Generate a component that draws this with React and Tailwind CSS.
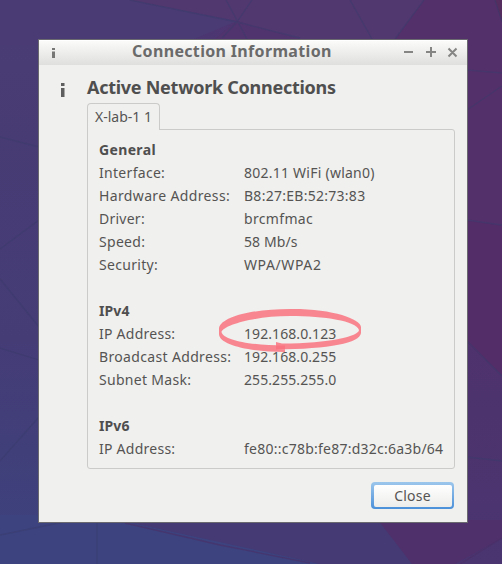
const FONT = 'font-["Noto_Sans","Open_Sans",sans-serif]';

const rows = [
  { head: "General", t: "tracking-[0.35px]" },
  { label: "Interface:", t: "tracking-[0.3px]", value: "802.11 WiFi (wlan0)", v: "tracking-[0.24px]" },
  { label: "Hardware Address:", t: "tracking-[0.36px]", value: "B8:27:EB:52:73:83", v: "tracking-[0.27px]" },
  { label: "Driver:", t: "tracking-[0.25px]", value: "brcmfmac", v: "tracking-[0.33px]" },
  { label: "Speed:", t: "tracking-[0.3px]", value: "58 Mb/s", v: "tracking-[0.1px]" },
  { label: "Security:", t: "tracking-[0.3px]", value: "WPA/WPA2", v: "tracking-[0.6px]" },
  {},
  { head: "IPv4", t: "tracking-[0.1px]" },
  { label: "IP Address:", t: "tracking-[0.25px]", value: "192.168.0.123", v: "tracking-[0.08px]", marked: true },
  { label: "Broadcast Address:", t: "tracking-[0.34px]", value: "192.168.0.255", v: "tracking-[0.08px]" },
  { label: "Subnet Mask:", t: "tracking-[0.3px]", value: "255.255.255.0", v: "tracking-[0.08px]" },
  {},
  { head: "IPv6", t: "tracking-[0.1px]" },
  { label: "IP Address:", t: "tracking-[0.25px]", value: "fe80::c78b:fe87:d32c:6a3b/64", v: "tracking-[0.24px]" },
];

function Wallpaper() {
  return (
    <svg className="absolute inset-0" width="502" height="564" viewBox="0 0 502 564">
      <defs>
        <linearGradient id="base" gradientUnits="userSpaceOnUse" x1="0" y1="480" x2="502" y2="200">
          <stop offset="0" stopColor="#3c427e" />
          <stop offset=".35" stopColor="#463c77" />
          <stop offset=".75" stopColor="#4d3570" />
          <stop offset="1" stopColor="#512f69" />
        </linearGradient>
        <linearGradient id="left" x1="0" y1="0" x2="0" y2="1">
          <stop offset="0" stopColor="#4a3b73" />
          <stop offset=".6" stopColor="#453c76" />
          <stop offset="1" stopColor="#3c427e" />
        </linearGradient>
        <linearGradient id="right" x1="0" y1="0" x2="0" y2="1">
          <stop offset="0" stopColor="#4e326d" />
          <stop offset="1" stopColor="#4a3570" />
        </linearGradient>
      </defs>
      <rect width="502" height="564" fill="url(#base)" />
      <path d="M0 0H60V564H0Z" fill="url(#left)" />
      <path d="M0 0H140L237 21L180 45H0Z" fill="#4a3b74" />
      <path d="M130 0H424L395 45H300L237 21Z" fill="#51386f" />
      <path d="M237 21L300 39H215Z" fill="#50346d" />
      <path d="M424 0H495L502 22V345L467 341V45L395 39Z" fill="#54306a" />
      <path d="M495 0H502V22Z" fill="#552d5f" />
      <path d="M460 220L502 225V376L460 336Z" fill="#522d68" />
      <path d="M460 336L502 376V564H460Z" fill="url(#right)" />
      <path d="M0 515H125L320 564H0Z" fill="#3c437f" />
      <path d="M118 520H380L412 564H320Z" fill="#453a74" />
      <path d="M378 520H502V538L455 564H412Z" fill="#4f306b" />
      <g stroke="#393b6c" strokeOpacity=".5" strokeWidth="1.3" fill="none">
        <path d="M130 0L237 22L300 38M226 0L247 39M252 0L237 22L222 38M350 0L372 39M424 0L395 39M495 0L502 22" />
        <path d="M467 70L502 73M467 110L502 86M467 220L502 225M467 341L502 376M467 457L502 461" />
        <path d="M0 137L39 147M39 220L0 249M0 279L39 327M0 348L39 360M39 417L0 461M0 535L64 522M97 522V564" />
      </g>
      <path d="M125 523L220 545L310 563M502 538L460 564" stroke="#4b2e66" strokeOpacity=".6" strokeWidth="1.3" fill="none" />
    </svg>
  );
}

function InfoGlyph({ small }) {
  return small ? (
    <svg width="5" height="12" viewBox="0 0 5 12" fill="#777775">
      <path d="M1 1h3v2H1zM1 4.500h3v6.500H1z" />
    </svg>
  ) : (
    <svg width="6" height="16" viewBox="0 0 6 16" fill="#5e5e5e">
      <path d="M1 1h3.500v3H1zM1 6h3.500v9H1z" />
    </svg>
  );
}

function RedCircle() {
  return (
    <svg className="pointer-events-none absolute -left-[26px] -top-[15px]" width="146" height="48" viewBox="218 307 146 48">
      <g fill="#ff3347" fillOpacity=".56">
        <path d="M285 352C250 352 219 345 219 334V328C222 316 255 309 290 309C332 308.500 361 319 361 327V333C360 343 330 349 276 349.500V342L282 343.500C330 343.500 359 336 359 330C356 321 325 316 290 316C255 316 224 325 221.500 332C223 340 250 345.500 285 345.500Z" />
        <path d="M276 345.500H285V349.500H276Z" fillOpacity=".2" />
      </g>
    </svg>
  );
}

export default function App() {
  return (
    <div className={`${FONT} relative h-[564px] w-[502px] overflow-hidden bg-[#483a74] pl-[38px] pt-[39px] text-[#555453]`}>
      <Wallpaper />
      <section className="relative flex h-[484px] w-[430px] flex-col border border-[#6b6970] bg-[#f0f0ee]">
        <header className="flex h-[25px] items-center border-t border-white bg-gradient-to-b from-[#fbfbfa] to-[#dfdfdd]">
          <span className="flex w-[93px] pl-[12px]"><InfoGlyph small /></span>
          <h1 className="-mt-[5px] w-[271px] whitespace-nowrap text-[16px] leading-6 font-bold tracking-[0.33px] text-[#6a6a6a]">Connection Information</h1>
          <svg className="-mt-[3px]" width="56" height="14" viewBox="403 44 56 14" stroke="#858583" strokeWidth="2" fill="none">
            <path d="M404 51H413M426 51H436M431 46V56M448.500 47.500L456.500 55.500M456.500 47.500L448.500 55.500" />
          </svg>
        </header>
        <div className="flex pl-[21px] pt-[9px]">
          <div className="w-[27px] pt-[8px]"><InfoGlyph /></div>
          <main className="w-[368px]">
            <h2 className="h-[29px] whitespace-nowrap text-[18px] leading-[27px] font-bold tracking-[-0.27px] text-[#4f4f4f]">Active Network Connections</h2>
            <div className="relative z-10 -mb-px flex h-[27px] w-[73px] rounded-t-[4px] border border-b-0 border-[#cbcbc9] bg-[#f0f0ee] pl-[7px]">
              <span className="whitespace-nowrap text-[14px] leading-[26px]">X-lab-1 1</span>
            </div>
            <div className="h-[340px] rounded-[3px] rounded-tl-none border border-[#cbcbc9] pl-[11px] pt-[8px]">
              {rows.map((r, i) => (
                <div key={i} className="flex h-[23px] whitespace-nowrap text-[14px] leading-[23px]">
                  {r.head && <h3 className={`font-bold text-[#4f4f4f] ${r.t}`}>{r.head}</h3>}
                  {r.label && <span className="w-[145px]"><span className={r.t}>{r.label}</span></span>}
                  {r.value && (
                    <span className={`relative ${r.v}`}>
                      {r.value}
                      {r.marked && <RedCircle />}
                    </span>
                  )}
                </div>
              ))}
            </div>
            <div className="flex justify-end pt-[13px]">
              <button className="mr-px h-[27px] w-[83px] rounded-[4px] bg-gradient-to-b from-[#9cc6ec] to-[#4a90d9] p-[2.500px]">
                <span className="flex h-full items-center justify-center rounded-[2px] bg-gradient-to-b from-white to-[#ededeb] text-[14px] tracking-[0.2px]">Close</span>
              </button>
            </div>
          </main>
        </div>
      </section>
    </div>
  );
}
